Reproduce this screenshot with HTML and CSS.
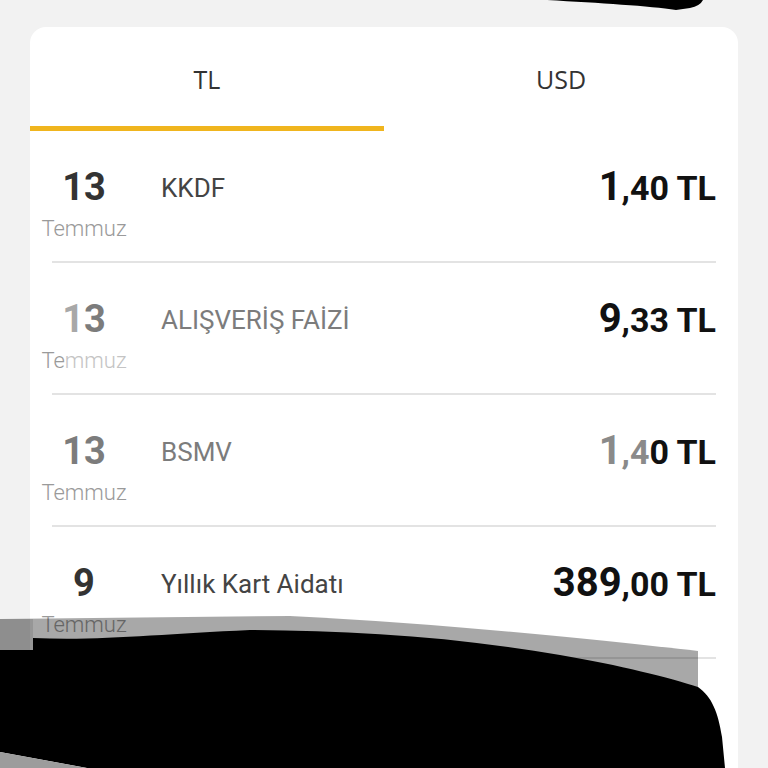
FILE: index.html
```html
<!DOCTYPE html>
<html lang="tr">
  <head>
    <meta charset="UTF-8" />
    <meta name="viewport" content="width=device-width, initial-scale=1.0" />
    <title>Hesap Hareketleri</title>
    <link rel="stylesheet" href="styles.css">
  </head>
  <body>
    <div id="page">
      <div class="card">
        <div class="tabs">
          <div class="tab active">TL</div>
          <div class="tab">USD</div>
        </div>

        <div class="list">
          <div class="row">
            <div class="date">
              <span class="day">13</span>
              <span class="month">Temmuz</span>
            </div>
            <div class="desc">KKDF</div>
            <div class="amount"><span class="int">1</span>,40 TL</div>
          </div>

          <div class="row">
            <div class="date">
              <span class="day"><span class="ghost">1</span><span class="dim">3</span></span>
              <span class="month">Te<span class="ghost">mmuz</span></span>
            </div>
            <div class="desc dim">ALIŞVERİŞ FAİZİ</div>
            <div class="amount"><span class="int">9</span>,33 TL</div>
          </div>

          <div class="row">
            <div class="date">
              <span class="day dim">13</span>
              <span class="month">Temmuz</span>
            </div>
            <div class="desc dim">BSMV</div>
            <div class="amount"><span class="int ghost">1</span><span class="ghost">,4</span>0 TL</div>
          </div>

          <div class="row">
            <div class="date">
              <span class="day">9</span>
              <span class="month">Temmuz</span>
            </div>
            <div class="desc">Yıllık Kart Aidatı</div>
            <div class="amount"><span class="int">389</span>,00 TL</div>
          </div>
        </div>
      </div>
    </div>

    <!-- redaction marks over the screenshot -->
    <svg class="scribble" viewBox="0 0 768 768" width="768" height="768">
      <path fill="#000" d="M547,0 L703,0 Q700,6 690,8 L676,10 C650,6 600,3 547,0 Z" />
      <path fill="rgba(0,0,0,0.34)" d="M0,619 L290,616 C450,624 600,640 698,651 L698,700 L0,700 Z" />
      <path fill="rgba(0,0,0,0.1)" d="M0,619 L33,619 L33,650 L0,650 Z" />
      <path fill="#000" d="M0,650 L33,650 L33,638 C100,641 160,634 250,630 C350,631 450,636 560,655 C620,665 670,678 698,687 C712,697 718,712 722,737 L725,768 L87,768 L0,752 Z" />
      <path fill="#9c9c9c" d="M0,752 L87,768 L0,768 Z" />
    </svg>
  </body>
</html>
```

FILE: styles.css
```css
body {
  margin: 0;
  background: #f2f2f2;
  font-family: "Roboto", "Liberation Sans", sans-serif;
  overflow: hidden;
}

#page {
  padding: 27px 30px 0;
}

.card {
  background: #fff;
  border-radius: 16px 16px 0 0;
  min-height: 741px;
}

.tabs {
  display: grid;
  grid-template-columns: 1fr 1fr;
}

.tab {
  box-sizing: border-box;
  height: 104px;
  padding-top: 36px;
  text-align: center;
  font-family: "Open Sans", "Liberation Sans", sans-serif;
  font-size: 25px;
  line-height: 33px;
  color: #333;
  border-bottom: 5px solid transparent;
}

.tab.active {
  border-bottom-color: #f0b51e;
}

.list {
  padding: 0 22px;
}

.row {
  box-sizing: border-box;
  height: 132px;
  padding-top: 34px;
  display: grid;
  grid-template-columns: 64px 1fr auto;
  column-gap: 45px;
  align-items: start;
  border-bottom: 2px solid #e3e3e3;
}

.date {
  display: flex;
  flex-direction: column;
  align-items: center;
}

.day {
  font-size: 38px;
  line-height: 44px;
  font-weight: 700;
  color: #333;
}

.month {
  margin-top: 7px;
  font-size: 22px;
  line-height: 25px;
  font-weight: 300;
  color: #9a9a9a;
  white-space: nowrap;
}

.desc {
  margin-top: 8px;
  font-size: 26px;
  line-height: 30px;
  color: #444;
}

.amount {
  font-size: 34px;
  line-height: 44px;
  font-weight: 700;
  color: #111;
  white-space: nowrap;
}

.amount .int {
  font-size: 40px;
}

.dim {
  color: #7c7c7c;
}

.ghost {
  color: #a8a8a8;
}

.month .ghost {
  color: #c4c4c4;
}

.amount .ghost {
  color: #8a8a8a;
}

.scribble {
  position: absolute;
  top: 0;
  left: 0;
  pointer-events: none;
}
```
